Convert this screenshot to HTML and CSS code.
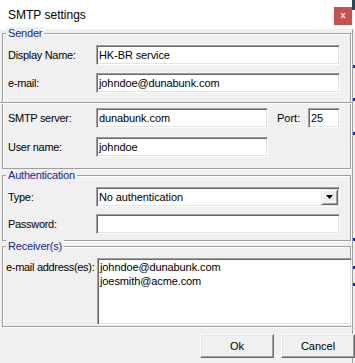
FILE: index.html
```html
<!DOCTYPE html>
<html>
<head>
<meta charset="utf-8">
<link rel="stylesheet" href="styles.css">
</head>
<body>
<div class="screen">
  <div class="dialog">
    <div class="titlebar">
      <span class="title">SMTP settings</span>
      <span class="close">x</span>
    </div>
    <div class="body">
      <div class="group sender">
        <span class="legend">Sender</span>
        <div class="row"><span class="label">Display Name:</span><div class="field wide">HK-BR service</div></div>
        <div class="row gap8"><span class="label">e-mail:</span><div class="field wide">johndoe@dunabunk.com</div></div>
        <div class="separator"></div>
        <div class="row"><span class="label">SMTP server:</span><div class="field mid">dunabunk.com</div><span class="port-label">Port:</span><div class="field port">25</div></div>
        <div class="row gap9"><span class="label">User name:</span><div class="field mid">johndoe</div></div>
      </div>
      <div class="group auth">
        <span class="legend">Authentication</span>
        <div class="row"><span class="label">Type:</span>
          <div class="field wide combo"><span class="combo-text">No authentication</span><span class="drop"><svg width="7" height="4" viewBox="0 0 7 4"><polygon points="0,0 7,0 3.5,4" fill="#000"/></svg></span></div>
        </div>
        <div class="row gap7"><span class="label">Password:</span><div class="field wide"></div></div>
      </div>
      <div class="group receivers">
        <span class="legend">Receiver(s)</span>
        <div class="recv-row">
          <span class="label recv-label">e-mail address(es):</span>
          <div class="textarea">johndoe@dunabunk.com<br>joesmith@acme.com</div>
        </div>
      </div>
      <div class="buttons">
        <div class="button">Ok</div>
        <div class="button">Cancel</div>
      </div>
    </div>
  </div>
  <div class="behind">
    <div class="behind-top"></div>
    <div class="behind-body">
      <span class="mark m1"></span>
      <span class="mark m2"></span>
      <span class="mark m3"></span>
      <span class="mark m4"></span>
      <span class="mark m5"></span>
      <span class="mark m6"></span>
    </div>
  </div>
</div>
</body>
</html>
```
FILE: styles.css
```css
* { box-sizing: border-box; }

body {
  margin: 0;
  width: 355px;
  height: 363px;
  overflow: hidden;
  background: #f0f0f0;
  font-family: "Liberation Sans", Arial, sans-serif;
  font-size: 11px;
  color: #000;
}

.screen {
  display: flex;
  height: 363px;
}

.dialog {
  width: 352px;
  flex: none;
  display: flex;
  flex-direction: column;
  position: relative;
  z-index: 1;
}

.titlebar {
  height: 29px;
  background: #fff;
  display: flex;
  align-items: center;
  padding-left: 8px;
}

.title {
  font-size: 12px;
  color: #000;
}

.close {
  margin-left: auto;
  align-self: flex-start;
  margin-top: 7px;
  width: 18px;
  height: 18px;
  background: #c75050;
  color: #fff;
  font-weight: bold;
  font-size: 9px;
  line-height: 17px;
  display: flex;
  justify-content: center;
}

.body {
  padding: 4px 0 0 2px;
}

.group {
  position: relative;
  width: 349px;
  border: 1px solid #a0a0a0;
  box-shadow: inset 1px 1px 0 #fff, 1px 1px 0 #fff;
  padding: 11px 0 11px 5px;
}

.auth {
  margin-top: 6px;
  padding-bottom: 6px;
}

.receivers {
  margin-top: 5px;
  padding-bottom: 1px;
}

.legend {
  position: absolute;
  top: -7px;
  left: 3px;
  padding: 0 2px;
  line-height: 13px;
  background: #f0f0f0;
  color: #14269c;
  letter-spacing: -0.2px;
}

.row {
  display: flex;
  align-items: center;
  height: 20px;
}

.gap7 { margin-top: 7px; }
.gap8 { margin-top: 8px; }
.gap9 { margin-top: 9px; }

.label {
  width: 88px;
  flex: none;
  white-space: nowrap;
  letter-spacing: -0.3px;
}

.field {
  height: 20px;
  flex: none;
  background: #fff;
  border: 1px solid;
  border-color: #a0a0a0 #fff #fff #a0a0a0;
  box-shadow: inset 1px 1px 0 #696969, inset -1px -1px 0 #e3e3e3;
  padding: 0 2px;
  line-height: 18px;
  white-space: nowrap;
  overflow: hidden;
  letter-spacing: -0.1px;
}

.wide { width: 244px; }
.mid { width: 172px; }
.port { width: 32px; }

.port-label {
  margin-left: 9px;
  width: 31px;
  flex: none;
}

.separator {
  width: 352px;
  height: 2px;
  margin: 9px 0 4px -8px;
  border-top: 1px solid #a0a0a0;
  border-bottom: 1px solid #fff;
}

.combo {
  display: flex;
  align-items: center;
  padding-right: 1px;
}

.combo-text {
  flex: 1;
}

.drop {
  width: 17px;
  height: 16px;
  flex: none;
  background: #f0f0f0;
  border: 1px solid;
  border-color: #e3e3e3 #696969 #696969 #e3e3e3;
  box-shadow: inset 1px 1px 0 #fff, inset -1px -1px 0 #a0a0a0;
  display: flex;
  align-items: center;
  justify-content: center;
}

.drop svg {
  display: block;
}

.recv-row {
  display: flex;
  align-items: flex-start;
}

.recv-label {
  margin-left: -2px;
  width: 91px;
  margin-top: 3px;
  line-height: 13px;
}

.textarea {
  width: 255px;
  height: 67px;
  flex: none;
  background: #fff;
  border: 1px solid;
  border-color: #a0a0a0 #fff #fff #a0a0a0;
  box-shadow: inset 1px 1px 0 #696969, inset -1px -1px 0 #e3e3e3;
  padding: 1px 2px;
  line-height: 14px;
  letter-spacing: -0.1px;
}

.buttons {
  display: flex;
  gap: 7px;
  margin-top: 7px;
  padding-left: 198px;
}

.button {
  width: 74px;
  height: 24px;
  flex: none;
  background: #f0f0f0;
  border: 1px solid;
  border-color: #fff #696969 #696969 #fff;
  box-shadow: inset -1px -1px 0 #a0a0a0, inset 1px 1px 0 #e3e3e3;
  display: flex;
  align-items: center;
  justify-content: center;
}

.behind {
  width: 3px;
  flex: none;
  display: flex;
  flex-direction: column;
}

.behind-top {
  height: 29px;
  background: linear-gradient(#2c4a55 0 10px, #fff 10px);
}

.behind-body {
  flex: 1;
  border-left: 1px solid #a0a0a0;
  display: flex;
  flex-direction: column;
  align-items: flex-end;
}

.mark {
  width: 2px;
  height: 3px;
  background: #1c2a9c;
}

.m1 { margin-top: 36px; }
.m2 { margin-top: 30px; }
.m3 { margin-top: 31px; }
.m4 { margin-top: 103px; }
.m5 { margin-top: 25px; }
.m6 { margin-top: 14px; }
```
